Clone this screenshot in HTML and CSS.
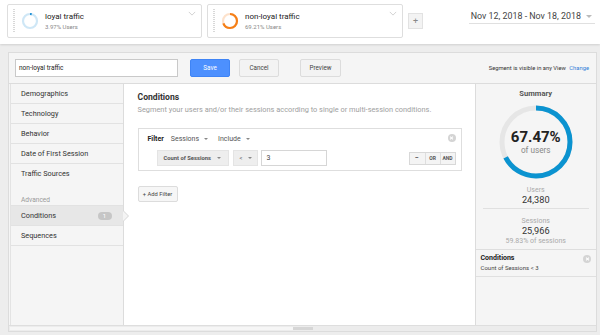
FILE: index.html
```html
<!DOCTYPE html>
<html>
<head>
<meta charset="utf-8">
<link rel="stylesheet" href="styles.css">
</head>
<body>
<div class="topbar">
  <div class="seg-card">
    <div class="grip"></div>
    <svg class="seg-donut" viewBox="0 0 18 18">
      <circle cx="9" cy="9" r="7" fill="none" stroke="#cfe7f6" stroke-width="2.2"/>
      <circle cx="9" cy="9" r="7" fill="none" stroke="#1b8fd6" stroke-width="2.2" stroke-dasharray="1.75 44" transform="rotate(-90 9 9)"/>
    </svg>
    <div class="seg-text"><div class="seg-name">loyal traffic</div><div class="seg-sub">3.97% Users</div></div>
    <svg class="chev" viewBox="0 0 10 6"><polyline points="1,1 5,5 9,1" fill="none" stroke="#c8c8c8" stroke-width="1"/></svg>
  </div>
  <div class="seg-card seg-card2">
    <div class="grip"></div>
    <svg class="seg-donut" viewBox="0 0 18 18">
      <circle cx="9" cy="9" r="7" fill="none" stroke="#fde2cc" stroke-width="2.2"/>
      <circle cx="9" cy="9" r="7" fill="none" stroke="#f57f17" stroke-width="2.2" stroke-dasharray="30.44 44" transform="rotate(-90 9 9)"/>
    </svg>
    <div class="seg-text"><div class="seg-name">non-loyal traffic</div><div class="seg-sub">69.21% Users</div></div>
    <svg class="chev" viewBox="0 0 10 6"><polyline points="1,1 5,5 9,1" fill="none" stroke="#c8c8c8" stroke-width="1"/></svg>
  </div>
  <div class="add-seg">+</div>
  <div class="date">Nov 12, 2018 - Nov 18, 2018<span class="date-caret"></span></div>
</div>

<div class="panel">
  <div class="panel-head">
    <div class="name-input">non-loyal traffic</div>
    <div class="btn btn-save">Save</div>
    <div class="btn btn-cancel">Cancel</div>
    <div class="btn btn-preview">Preview</div>
    <div class="visible">Segment is visible in any View <span class="change">Change</span></div>
  </div>
  <div class="panel-body">
    <div class="nav">
      <div class="nav-item">Demographics</div>
      <div class="nav-item">Technology</div>
      <div class="nav-item">Behavior</div>
      <div class="nav-item">Date of First Session</div>
      <div class="nav-item nav-last">Traffic Sources</div>
      <div class="nav-label">Advanced</div>
      <div class="nav-item nav-active">Conditions <span class="badge">1</span></div>
      <div class="nav-item">Sequences</div>
    </div>
    <div class="content">
      <div class="c-title">Conditions</div>
      <div class="c-sub">Segment your users and/or their sessions according to single or multi-session conditions.</div>
      <div class="filter-box">
        <div class="filter-row">
          <span class="f-label">Filter</span>
          <span class="f-drop">Sessions<span class="caret"></span></span>
          <span class="f-drop">Include<span class="caret"></span></span>
          <span class="x-icon"></span>
        </div>
        <div class="cond-row">
          <div class="sel sel-dim">Count of Sessions<span class="caret"></span></div>
          <div class="sel sel-op">&lt;<span class="caret"></span></div>
          <div class="val">3</div>
          <div class="logic">
            <span class="lg lg-minus">&minus;</span><span class="lg">OR</span><span class="lg">AND</span>
          </div>
        </div>
      </div>
      <div class="add-filter">+ Add Filter</div>
    </div>
    <div class="summary">
      <div class="s-title">Summary</div>
      <div class="ring">
        <svg viewBox="0 0 74 74" class="ring-svg">
          <circle cx="37" cy="37" r="34" fill="none" stroke="#e6e6e6" stroke-width="5"/>
          <circle cx="37" cy="37" r="34" fill="none" stroke="#0b93d0" stroke-width="5" stroke-dasharray="144.1 300" transform="rotate(-90 37 37)"/>
        </svg>
        <div class="ring-text">
          <div class="ring-pct">67.47%</div>
          <div class="ring-of">of users</div>
        </div>
      </div>
      <div class="stat">
        <div class="stat-label">Users</div>
        <div class="stat-val">24,380</div>
      </div>
      <div class="stat stat-sessions">
        <div class="stat-label">Sessions</div>
        <div class="stat-val">25,966</div>
        <div class="stat-label">59.83% of sessions</div>
      </div>
      <div class="s-cond">
        <div class="s-cond-title">Conditions</div>
        <div class="s-cond-text">Count of Sessions &lt; 3</div>
        <span class="x-icon s-x"></span>
      </div>
    </div>
  </div>
  <div class="scroll"><div class="scroll-thumb"></div></div>
</div>
</body>
</html>
```

FILE: styles.css
```css
* { box-sizing: border-box; }
html, body { margin: 0; padding: 0; }
body {
  width: 600px;
  height: 335px;
  overflow: hidden;
  background: #ededed;
  font-family: Roboto, "Liberation Sans", sans-serif;
  color: #333;
}

/* top bar */
.topbar {
  height: 44px;
  background: #fff;
  box-shadow: 0 1px 2px rgba(0,0,0,0.12);
  display: flex;
  align-items: flex-start;
  padding: 4px 0 0 7px;
}
.seg-card {
  position: relative;
  width: 195px;
  height: 34px;
  border: 1px solid #dedede;
  border-radius: 2px;
  display: flex;
  align-items: center;
  padding-left: 5px;
}
.seg-card2 { margin-left: 5px; width: 196px; }
.grip {
  width: 2px;
  height: 24px;
  background: repeating-linear-gradient(to bottom, #d8d8d8 0 1px, transparent 1px 2px);
}
.seg-donut { width: 18px; height: 18px; margin-left: 6px; }
.seg-text { margin-left: 6px; }
.seg-name { font-size: 8px; color: #222; line-height: 10px; }
.seg-sub { font-size: 6px; color: #888; line-height: 8px; margin-top: 1px; }
.chev { position: absolute; right: 5px; top: 6px; width: 8px; height: 5px; }
.add-seg {
  margin: 9px 0 0 5px;
  width: 15px;
  height: 16px;
  border: 1px solid #e2e2e2;
  background: #f3f3f3;
  color: #888;
  font-size: 9px;
  line-height: 14px;
  text-align: center;
}
.date {
  margin: 5px 5px 0 auto;
  font-size: 8.9px;
  color: #444;
  height: 15px;
  line-height: 12px;
  border-bottom: 1px solid #e0e0e0;
  padding: 0 3px 0 2px;
  display: flex;
  align-items: center;
}
.date-caret {
  width: 0; height: 0;
  border-left: 3px solid transparent;
  border-right: 3px solid transparent;
  border-top: 3px solid #bbb;
  margin-left: 5px;
}

/* panel */
.panel {
  margin: 8px 3px 0 8px;
  border: 1px solid #dcdcdc;
  background: #f5f5f5;
}
.panel-head {
  height: 31px;
  display: flex;
  align-items: center;
  padding: 0 7px 0 6px;
  border-bottom: 1px solid #dcdcdc;
}
.name-input {
  width: 163px;
  height: 18px;
  border: 1px solid #c9c9c9;
  background: #fff;
  font-size: 6.5px;
  line-height: 16px;
  padding-left: 3px;
  color: #222;
}
.btn {
  height: 18px;
  width: 40px;
  border-radius: 2px;
  font-size: 6.3px;
  line-height: 16px;
  text-align: center;
  border: 1px solid #dcdcdc;
  background: #f3f3f3;
  color: #444;
}
.btn-save { margin-left: 12px; background: #4d90fe; border-color: #3f84f5; color: #fff; }
.btn-cancel { margin-left: 9px; }
.btn-preview { margin-left: 21px; width: 41px; }
.visible { margin-left: auto; font-size: 5.8px; color: #333; }
.change { color: #2f7ed8; margin-left: 2px; }

.panel-body {
  display: flex;
  height: 241px;
  padding-left: 1px;
}
.nav {
  width: 113px;
  background: #f5f5f5;
  border-left: 1px solid #e3e3e3;
}
.nav-item {
  position: relative;
  height: 20px;
  line-height: 20px;
  border-bottom: 1px solid #e2e2e2;
  font-size: 7.3px;
  color: #333;
  padding-left: 10px;
}
.nav-last { border-bottom: none; }
.nav-label {
  font-size: 6.6px;
  color: #9a9a9a;
  padding: 12px 0 0 10px;
  height: 22px;
  line-height: 8px;
  border-bottom: 1px solid #e2e2e2;
}
.nav-active { background: #e7e7e7; }
.nav-active::after {
  content: "";
  position: absolute;
  right: -6px;
  top: 4px;
  width: 0; height: 0;
  border-top: 6px solid transparent;
  border-bottom: 6px solid transparent;
  border-left: 6px solid #d6d6d6;
}
.nav-active::before {
  content: "";
  position: absolute;
  right: -5px;
  top: 5px;
  width: 0; height: 0;
  border-top: 5px solid transparent;
  border-bottom: 5px solid transparent;
  border-left: 5px solid #f4f4f4;
  z-index: 2;
}
.badge {
  position: absolute;
  right: 11px;
  top: 6px;
  width: 14px;
  height: 8px;
  border-radius: 4px;
  background: #c6c6c6;
  color: #fff;
  font-size: 6px;
  line-height: 8px;
  text-align: center;
}

.content {
  flex: 1;
  background: #fff;
  border-left: 1px solid #dcdcdc;
  padding: 7px 13px 0 14px;
}
.c-title { font-size: 8.6px; font-weight: 700; color: #333; line-height: 12px; }
.c-sub { font-size: 7.4px; color: #a0a0a0; line-height: 10px; margin-top: 2px; }
.filter-box {
  margin-top: 13px;
  width: 324px;
  height: 43px;
  border: 1px solid #dedede;
  position: relative;
}
.filter-row {
  display: flex;
  align-items: center;
  height: 18px;
  margin-top: 1px;
  padding-left: 9px;
  font-size: 7px;
}
.f-label { font-weight: 700; color: #222; margin-right: 7px; }
.f-drop { color: #555; display: flex; align-items: center; margin-right: 10px; }
.caret {
  display: inline-block;
  width: 0; height: 0;
  border-left: 2px solid transparent;
  border-right: 2px solid transparent;
  border-top: 2px solid #888;
  margin-left: 5px;
}
.x-icon {
  position: absolute;
  right: 5px;
  top: 5px;
  width: 8px;
  height: 8px;
  border-radius: 50%;
  background: #d4d4d4;
}
.x-icon::before, .x-icon::after {
  content: "";
  position: absolute;
  left: 3.5px;
  top: 2px;
  width: 1px;
  height: 4px;
  background: #fff;
  transform: rotate(45deg);
}
.x-icon::after { transform: rotate(-45deg); }
.cond-row {
  display: flex;
  align-items: center;
  margin-top: 2px;
  padding-left: 18px;
  height: 16px;
}
.sel {
  height: 16px;
  background: #eeeeee;
  border: 1px solid #e4e4e4;
  font-size: 5.8px;
  font-weight: 700;
  color: #555;
  display: flex;
  align-items: center;
  padding-left: 6px;
}
.sel .caret { margin-left: 6px; }
.sel-dim { width: 72px; }
.sel-op { width: 25px; margin-left: 4px; font-weight: 400; }
.val {
  margin-left: 3px;
  width: 66px;
  height: 16px;
  border: 1px solid #d6d6d6;
  font-size: 7px;
  color: #444;
  line-height: 14px;
  padding-left: 5px;
}
.logic {
  margin-left: auto;
  margin-right: 5px;
  display: flex;
  border: 1px solid #d8d8d8;
  height: 13px;
}
.lg {
  width: 15px;
  font-size: 5px;
  font-weight: 700;
  color: #555;
  background: #f4f4f4;
  text-align: center;
  line-height: 11px;
  border-left: 1px solid #dedede;
}
.lg-minus { border-left: none; font-size: 7px; }
.add-filter {
  margin-top: 15px;
  width: 40px;
  height: 16px;
  border: 1px solid #dcdcdc;
  border-radius: 2px;
  background: #f6f6f6;
  font-size: 5.8px;
  color: #444;
  line-height: 14px;
  text-align: center;
}

.summary {
  width: 122px;
  background: #f5f5f5;
  border-left: 1px solid #dcdcdc;
  display: flex;
  flex-direction: column;
  align-items: stretch;
  text-align: center;
}
.s-title { font-size: 7.6px; font-weight: 700; color: #555; margin-top: 5px; line-height: 9px; }
.ring { position: relative; width: 74px; height: 74px; margin: 7px auto 0; }
.ring-svg { width: 74px; height: 74px; display: block; }
.ring-text {
  position: absolute;
  inset: 0;
  display: flex;
  flex-direction: column;
  justify-content: center;
  align-items: center;
}
.ring-pct { font-size: 15px; font-weight: 700; color: #222; line-height: 15px; margin-top: 1px; }
.ring-of { font-size: 8.2px; color: #888; line-height: 10px; }
.stat { margin: 6px 7px 0; padding-bottom: 3px; border-bottom: 1px solid #e0e0e0; }
.stat-label { font-size: 7px; color: #aaa; line-height: 10px; }
.stat-val { font-size: 9.2px; color: #333; line-height: 10px; }
.stat-sessions { margin: 7px 0 0; padding-bottom: 3px; border-bottom: 1px solid #dedede; }
.s-cond {
  position: relative;
  text-align: left;
  padding: 4px 6px 4px 5px;
  border-bottom: 1px solid #e0e0e0;
}
.s-cond-title { font-size: 7px; font-weight: 700; color: #222; line-height: 9px; }
.s-cond-text { font-size: 6px; color: #444; line-height: 9px; }
.s-x { right: 5px; top: 5px; }

.scroll {
  height: 6px;
  border-top: 1px solid #dedede;
  background: #ececec;
  padding: 1px 0 1px 1px;
  display: flex;
}
.scroll::before {
  content: "";
  width: 283px;
  background: #f6f6f6;
}
.scroll-thumb { width: 20px; background: #d6d6d6; }
```
